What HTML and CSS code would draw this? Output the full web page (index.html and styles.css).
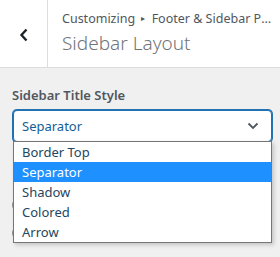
FILE: index.html
```html
<!DOCTYPE html>
<html lang="en">
<head>
    <meta charset="UTF-8">
    <title>Sidebar Layout</title>
    <link rel="stylesheet" href="styles.css">
</head>
<body>
    <div class="header">
        <button class="back" aria-label="Back">
            <svg width="10" height="14" viewBox="0 0 10 14"><path d="M7.5 1.5 L2.5 7 L7.5 12.5" fill="none" stroke="#1d2327" stroke-width="2.4"/></svg>
        </button>
        <div class="titles">
            <div class="crumbs">Customizing <span class="arrow">&#9656;</span> Footer &amp; Sidebar Panel</div>
            <div class="title">Sidebar Layout</div>
        </div>
    </div>
    <div class="section">
        <div class="control">
            <label class="label">Sidebar Title Style</label>
            <div class="selectWrap">
                <div class="select">
                    <span>Separator</span>
                    <svg width="12" height="8" viewBox="0 0 12 8"><path d="M1.5 1.5 L6 6 L10.5 1.5" fill="none" stroke="#50575e" stroke-width="1.8"/></svg>
                </div>
                <ul class="options">
                    <li>Border Top</li>
                    <li class="selected">Separator</li>
                    <li>Shadow</li>
                    <li>Colored</li>
                    <li>Arrow</li>
                </ul>
            </div>
        </div>
        <div class="below">
            <span class="radio"></span>
            <span class="radio"></span>
        </div>
    </div>
</body>
</html>
```

FILE: styles.css
```css
*{
    padding: 0;
    margin: 0;
    box-sizing: border-box;
}
body{
    background: #f0f0f1;
    font-family: "Noto Sans", "Open Sans", sans-serif;
    color: #50575e;
    width: 280px;
    height: 257px;
    overflow: hidden;
}
.header{
    display: flex;
    height: 68px;
    background: #fff;
    border-bottom: 1px solid #dcdcde;
}
.back{
    width: 48px;
    border: none;
    border-right: 1px solid #dcdcde;
    background: #fff;
    display: flex;
    align-items: center;
    justify-content: center;
    padding-top: 2px;
}
.titles{
    padding: 8px 0 0 14px;
    min-width: 0;
    flex: 1;
}
.crumbs{
    font-size: 12.5px;
    line-height: 20px;
    color: #50575e;
    white-space: nowrap;
    overflow: hidden;
    text-overflow: ellipsis;
    padding-right: 8px;
}
.arrow{
    font-size: 8px;
    vertical-align: 2px;
    margin: 0 3px;
}
.title{
    font-size: 19px;
    font-weight: 300;
    line-height: 28px;
    color: #70757a;
}
.section{
    padding: 18px 8px 0 12px;
}
.label{
    display: block;
    font-size: 13px;
    font-weight: 600;
    line-height: 18px;
    color: #50575e;
    margin-bottom: 6px;
}
.selectWrap{
    position: relative;
    margin-left: 1px;
}
.select{
    height: 32px;
    border: 1px solid #2271b1;
    box-shadow: 0 0 0 1px #2271b1;
    border-radius: 4px;
    background: #fff;
    display: flex;
    align-items: center;
    justify-content: space-between;
    padding: 0 12px 0 8px;
    font-size: 13px;
    color: #135e96;
}
.options{
    position: absolute;
    top: 31px;
    left: 0;
    width: 259px;
    list-style: none;
    background: #fff;
    border: 1px solid #767676;
    box-shadow: 2px 2px 4px rgba(0, 0, 0, 0.18);
    z-index: 2;
}
.options li{
    height: 20px;
    line-height: 20px;
    padding-left: 8px;
    font-size: 13px;
    color: #24465e;
}
.options .selected{
    background: #1e90ff;
    color: #fff;
}
.below{
    display: flex;
    flex-direction: column;
    gap: 14px;
    padding: 56px 0 0 0;
}
.radio{
    width: 14px;
    height: 14px;
    border: 1px solid #8c8f94;
    border-radius: 50%;
}
```
